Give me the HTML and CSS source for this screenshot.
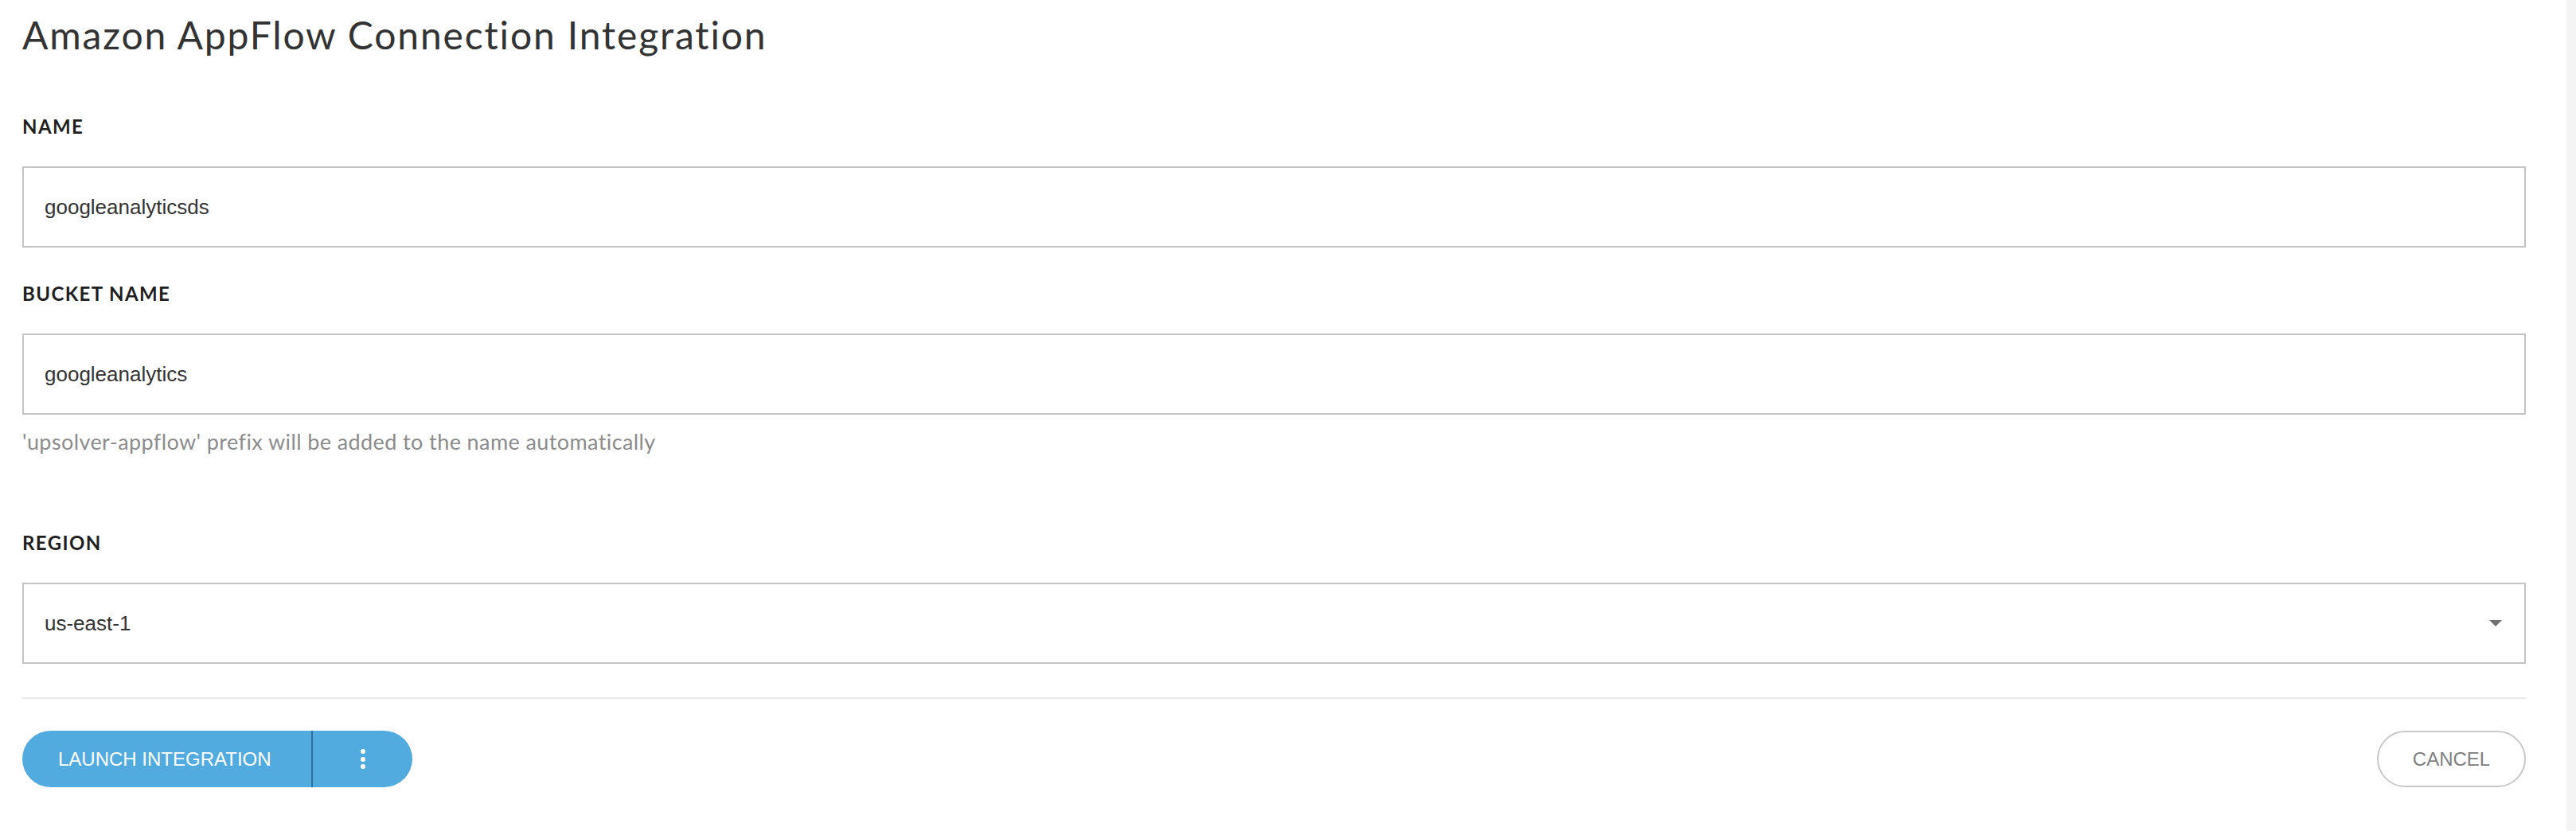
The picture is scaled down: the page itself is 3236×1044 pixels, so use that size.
FILE: index.html
```html
<!DOCTYPE html>
<html lang="en">
<head>
<meta charset="utf-8">
<title>Amazon AppFlow Connection Integration</title>
<link rel="stylesheet" href="styles.css">
</head>
<body>
<div class="page">
  <main class="content">
    <h1 class="title">Amazon AppFlow Connection Integration</h1>

    <div class="label label-first">NAME</div>
    <div class="input">googleanalyticsds</div>

    <div class="label">BUCKET NAME</div>
    <div class="input">googleanalytics</div>
    <div class="help">'upsolver-appflow' prefix will be added to the name automatically</div>

    <div class="label label-region">REGION</div>
    <div class="input select">
      <span>us-east-1</span>
      <span class="caret"></span>
    </div>

    <div class="divider"></div>

    <div class="actions">
      <div class="split-btn">
        <span class="split-main">LAUNCH INTEGRATION</span>
        <span class="split-sep"></span>
        <span class="split-more">
          <span class="dot"></span><span class="dot"></span><span class="dot"></span>
        </span>
      </div>
      <div class="cancel-btn">CANCEL</div>
    </div>
  </main>
  <div class="scrollbar"></div>
</div>
</body>
</html>
```

FILE: styles.css
```css
html, body {
  margin: 0;
  padding: 0;
  background: #ffffff;
}

.page {
  display: flex;
  width: 3236px;
  height: 1044px;
  overflow: hidden;
}

.content {
  width: 3145px;
  padding-left: 28px;
  padding-right: 51px;
  display: flex;
  flex-direction: column;
}

.scrollbar {
  width: 12px;
  flex: none;
  background: #f4f4f4;
  height: 100%;
}

.title {
  margin: 14px 0 0 0;
  font-family: Lato, "Open Sans", sans-serif;
  font-weight: 400;
  font-size: 48px;
  line-height: 60px;
  letter-spacing: 1.85px;
  color: #333333;
  white-space: nowrap;
}

.label {
  margin-top: 43px;
  font-family: Lato, "Open Sans", sans-serif;
  font-weight: 700;
  font-size: 24px;
  line-height: 30px;
  color: #1f1f1f;
  letter-spacing: 1.4px;
}

.label-first {
  margin-top: 70px;
}

.label-region {
  margin-top: 96px;
}

.input {
  margin-top: 35px;
  box-sizing: border-box;
  height: 102px;
  border: 2px solid #c4c4c4;
  padding: 0 26px;
  display: flex;
  align-items: center;
  font-family: "Liberation Sans", Arial, sans-serif;
  font-size: 26px;
  color: #333333;
}

.select {
  justify-content: space-between;
}

.caret {
  width: 0;
  height: 0;
  border-left: 8px solid transparent;
  border-right: 8px solid transparent;
  border-top: 8px solid #707070;
  margin-right: 2px;
}

.help {
  margin-top: 18px;
  font-family: Lato, "Open Sans", sans-serif;
  font-size: 27px;
  line-height: 32px;
  color: #8c8c8c;
  letter-spacing: 0.4px;
}

.divider {
  margin-top: 42px;
  height: 2px;
  background: #ebebeb;
}

.actions {
  margin-top: 40px;
  display: flex;
  justify-content: space-between;
  align-items: center;
}

.split-btn {
  display: flex;
  height: 71px;
  background: #52abdf;
  border-radius: 36px;
  overflow: hidden;
  font-family: "Liberation Sans", Arial, sans-serif;
  font-size: 24px;
  color: #ffffff;
}

.split-main {
  display: flex;
  align-items: center;
  padding: 0 46px 0 45px;
  width: 272px;
}

.split-sep {
  width: 2px;
  background: #2f6f9c;
}

.split-more {
  width: 125px;
  display: flex;
  flex-direction: column;
  align-items: center;
  justify-content: center;
  gap: 3.5px;
}

.dot {
  width: 6px;
  height: 6px;
  border-radius: 50%;
  background: #ffffff;
}

.cancel-btn {
  box-sizing: border-box;
  height: 71px;
  width: 187px;
  border: 2px solid #c8c8c8;
  border-radius: 36px;
  display: flex;
  align-items: center;
  justify-content: center;
  font-family: "Liberation Sans", Arial, sans-serif;
  font-size: 24px;
  color: #808080;
}
```
